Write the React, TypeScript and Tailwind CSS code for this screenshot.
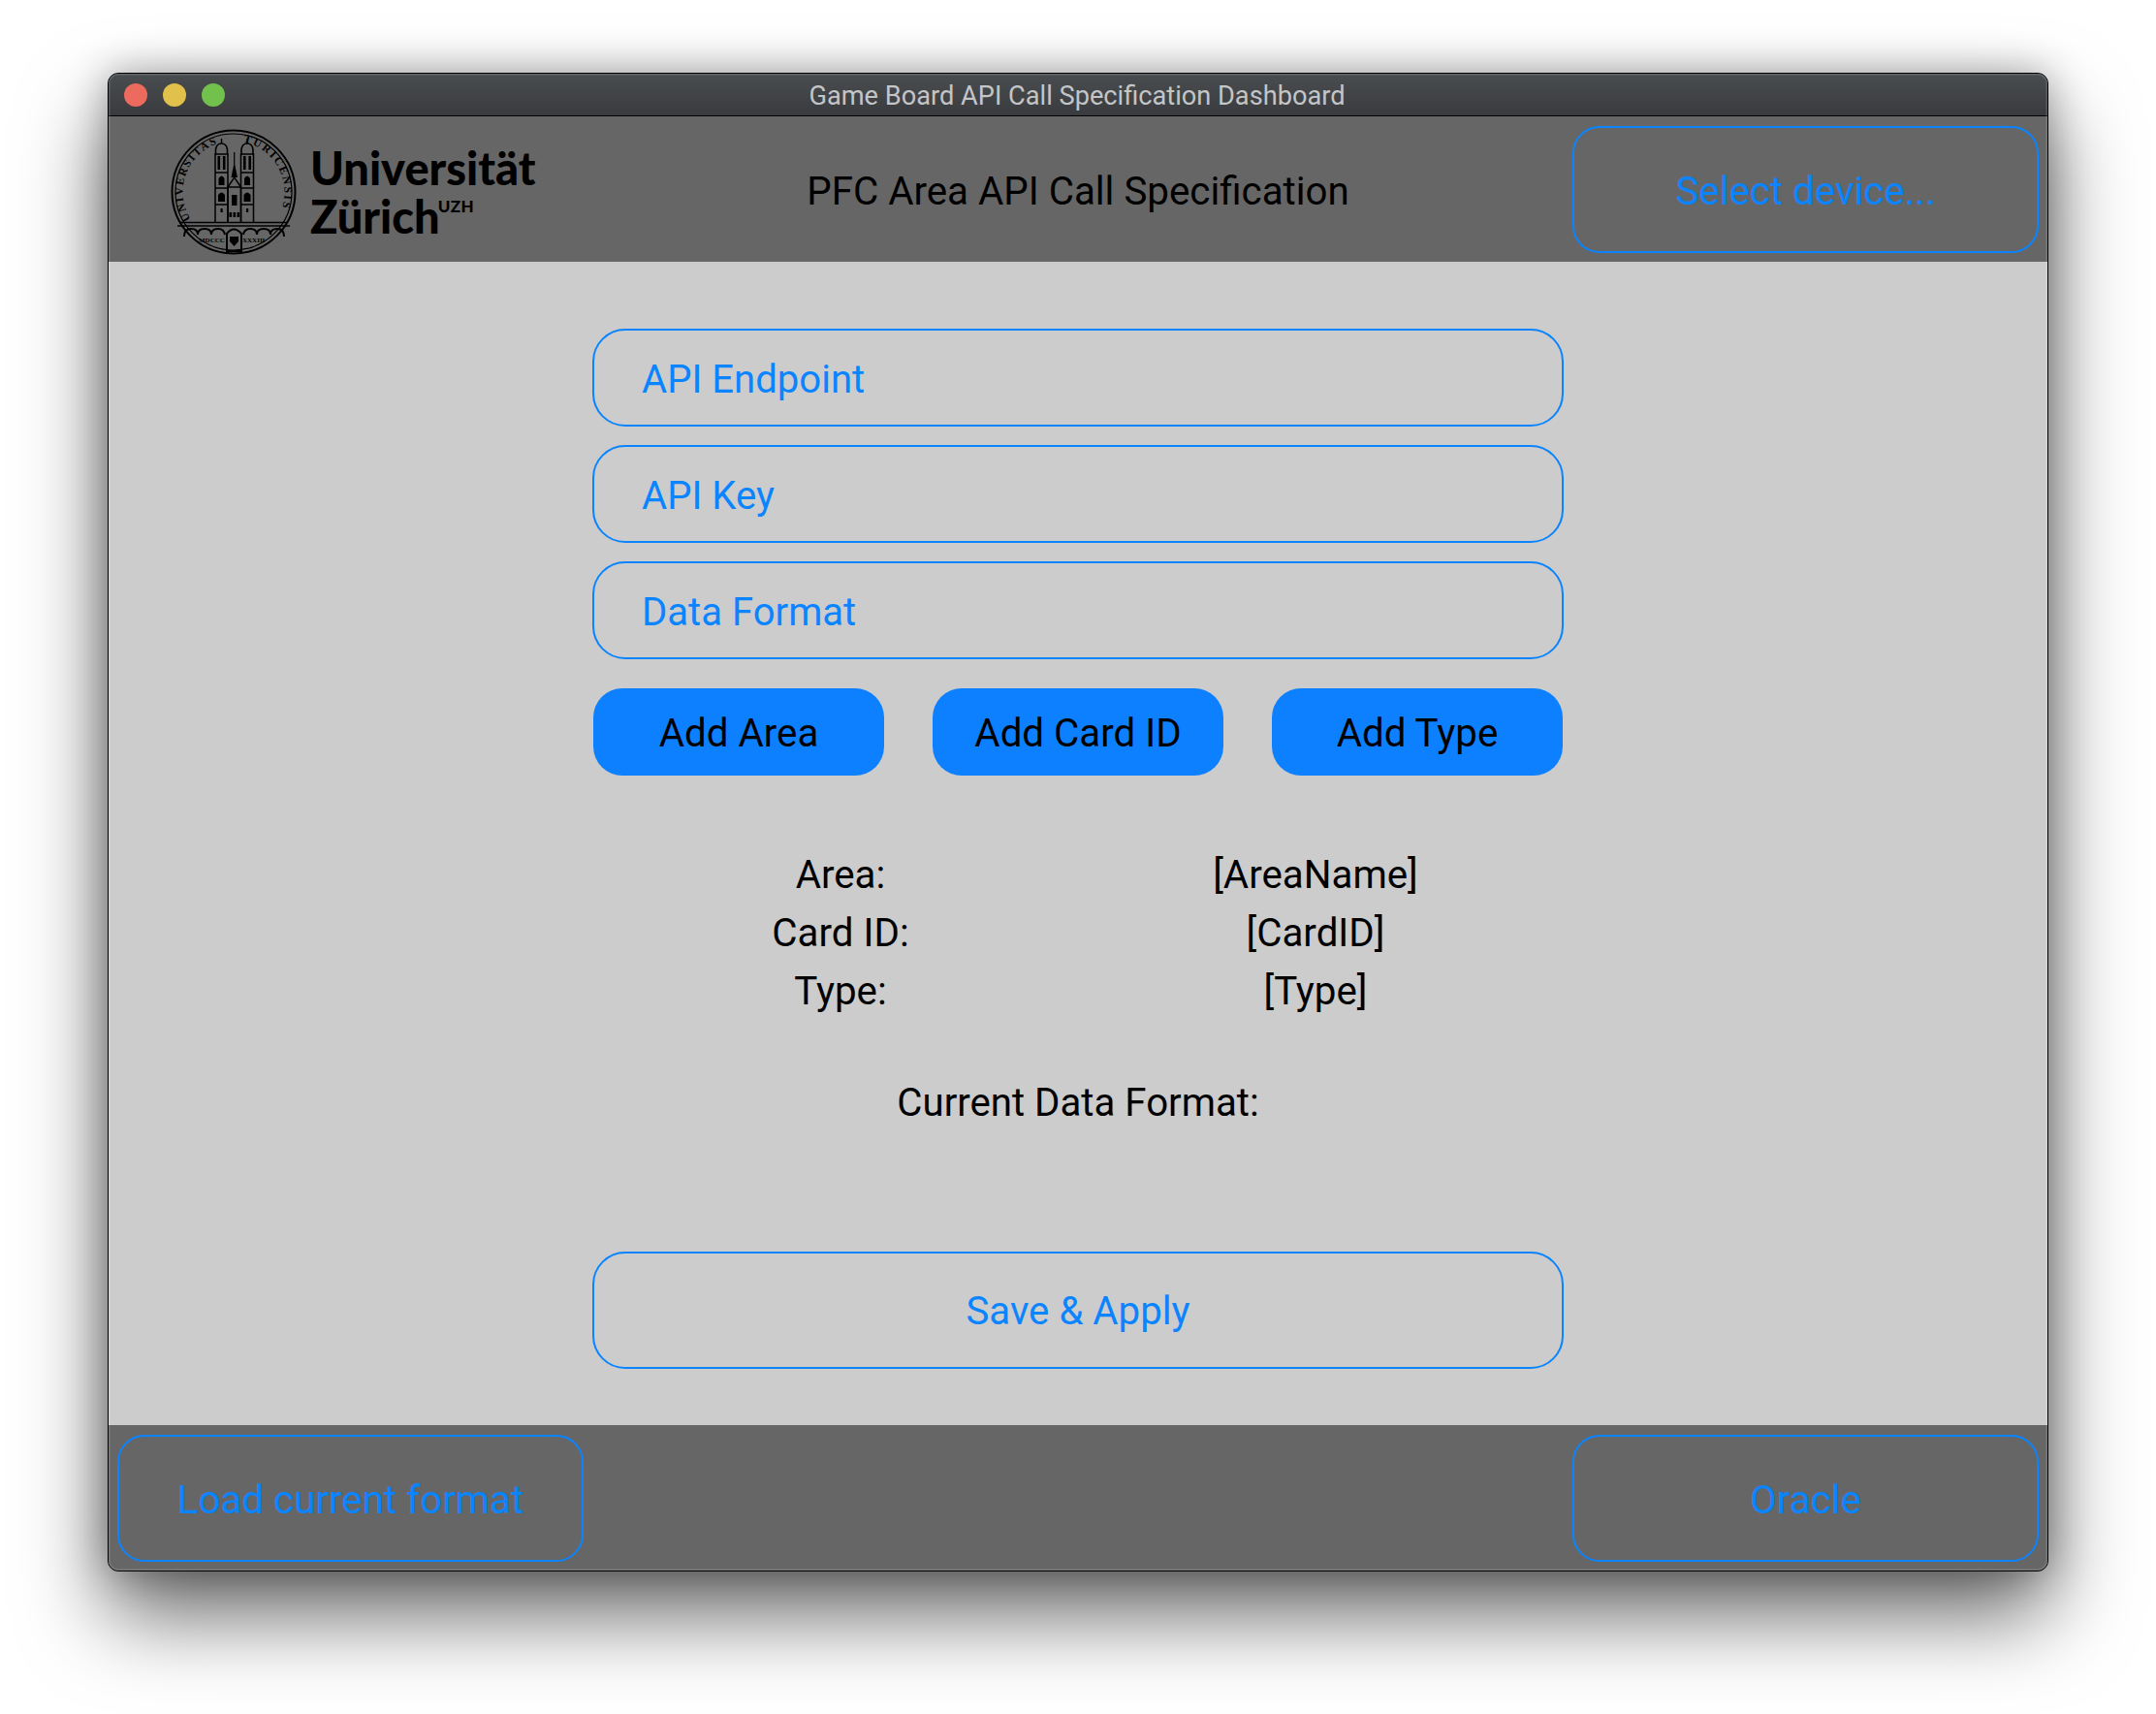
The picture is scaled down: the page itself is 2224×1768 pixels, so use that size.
function Tower({ x }: { x: number }) {
  // x is the tower's centre in the seal's viewBox
  return (
    <g>
      <path
        d={`M${x - 6.5} 96V26H${x + 6.5}V96M${x - 6.5} 45H${x + 6.5}M${x - 6.5} 61H${x + 6.5}M${x - 6.5} 78H${x + 6.5}`}
        stroke="#000"
        strokeWidth="1.5"
      />
      <path
        d={`M${x - 6} 26V21Q${x - 5} 15 ${x} 15Q${x + 5} 15 ${x + 6} 21V26`}
        stroke="#000"
        strokeWidth="1.6"
      />
      <path d={`M${x} 10V15`} stroke="#000" strokeWidth="1.4" />
      <g fill="#000">
        <rect x={x - 4} y="28" width="2.6" height="14" />
        <rect x={x + 1.4} y="28" width="2.6" height="14" />
        <path d={`M${x - 3} 58V51Q${x} 46 ${x + 3} 51V58Z`} />
        <path d={`M${x - 3.5} 75V68Q${x} 63 ${x + 3.5} 68V75Z`} />
        <rect x={x - 1} y="82" width="2.2" height="4" />
      </g>
    </g>
  )
}

function Seal() {
  return (
    <svg width="130" height="130" viewBox="0 0 130 130" fill="none" className="shrink-0">
      <circle cx="65" cy="65" r="63.5" stroke="#000" strokeWidth="2" />
      <circle cx="65" cy="65" r="60" stroke="#000" strokeWidth="1.2" />
      <defs>
        <path id="sealLeft" d="M 20.5 93 A 52.5 52.5 0 0 1 60 12.8" />
        <path id="sealRight" d="M 75 13.5 A 52.5 52.5 0 0 1 110 92" />
      </defs>
      <text fill="#000" fontSize="11.5" fontWeight="700" fontFamily="Liberation Serif, serif">
        <textPath href="#sealLeft" textLength="94">UNIVERSITAS</textPath>
      </text>
      <text fill="#000" fontSize="11.5" fontWeight="700" fontFamily="Liberation Serif, serif">
        <textPath href="#sealRight" textLength="88">TURICENSIS</textPath>
      </text>
      <Tower x={52.5} />
      <Tower x={79} />
      {/* nave and spire */}
      <path d="M59 96V60H72.5V96M59 60L65.7 50L72.5 60" stroke="#000" strokeWidth="1.5" />
      <path d="M62.5 50L65.7 34L69 50Z" fill="#000" />
      <path d="M65.7 24V36" stroke="#000" strokeWidth="1.2" />
      <g fill="#000">
        <rect x="63" y="68" width="5.5" height="11" />
        <rect x="60.5" y="86" width="2.6" height="5" />
        <rect x="64.5" y="86" width="2.6" height="5" />
        <rect x="68.5" y="86" width="2.6" height="5" />
      </g>
      {/* bridge */}
      <path d="M9 96.5H121M7 100H123" stroke="#000" strokeWidth="1.6" />
      <path
        d="M14 111Q14 103 21 103Q28 103 28 109Q28 103 35 103Q42 103 42 109Q42 103 49 103Q55 103 56 109M75 109Q76 103 82 103Q89 103 89 109Q89 103 96 103Q103 103 103 109Q103 103 110 103Q117 103 117 111"
        stroke="#000"
        strokeWidth="2"
      />
      <text x="29" y="117" fill="#000" fontSize="7" fontWeight="700" fontFamily="Liberation Serif, serif">MDCCC</text>
      <text x="74" y="117" fill="#000" fontSize="7" fontWeight="700" fontFamily="Liberation Serif, serif">XXXIII</text>
      <path d="M58 108Q65 99 73 108V126H58Z" stroke="#000" strokeWidth="2" />
      <path d="M61 111H70V116L65.5 121L61 116Z" fill="#000" />
    </svg>
  )
}

function Logo() {
  return (
    <div className="flex items-center gap-[14px] pl-[64px] pt-[5px] w-[650px]">
      <Seal />
      <div className="font-['Lato'] font-black text-black text-[47px] leading-[50px] pt-[1px]">
        <div>Universität</div>
        <div className="flex items-start">
          Zürich
          <span className="text-[17px] leading-[16px] mt-[7px] ml-[-2px] tracking-[0.5px]">UZH</span>
        </div>
      </div>
    </div>
  )
}

function OutlineButton({ label }: { label: string }) {
  return (
    <button className="w-[481px] h-[131px] pt-[6px] rounded-[28px] border-2 border-[#0a84ff] text-[#0a84ff] text-[40.3px]">
      {label}
    </button>
  )
}

function Field({ placeholder }: { placeholder: string }) {
  return (
    <input
      placeholder={placeholder}
      className="w-[1002px] h-[101px] pt-[3px] rounded-[34px] border-2 border-[#0a84ff] bg-transparent pl-[49px] text-[40.1px] placeholder:text-[#0a84ff] outline-none"
    />
  )
}

const rows = [
  ["Area:", "[AreaName]"],
  ["Card ID:", "[CardID]"],
  ["Type:", "[Type]"],
]

export default function App() {
  return (
    <div className="w-[2224px] h-[1768px] bg-white pt-[75px] pl-[111px] font-['Roboto'] overflow-hidden">
      <div className="relative w-[2002px] h-[1546px] flex flex-col rounded-[11px] overflow-hidden bg-[#666] border border-black shadow-[0_44px_88px_rgba(0,0,0,0.6),0_0_40px_rgba(0,0,0,0.3)]">
        {/* title bar */}
        <div className="relative h-[44px] shrink-0 flex items-center justify-center bg-gradient-to-b from-[#4a4d50] to-[#393b3f] border-b border-black">
          <div className="absolute left-[16px] top-[10px] flex gap-[16px]">
            <span className="w-[24px] h-[24px] rounded-full bg-[#ec6a5e]" />
            <span className="w-[24px] h-[24px] rounded-full bg-[#e2c04c]" />
            <span className="w-[24px] h-[24px] rounded-full bg-[#72c14c]" />
          </div>
          <span className="text-[27.2px] text-[#c4c5c7] mt-[4px] ml-[-2px]">Game Board API Call Specification Dashboard</span>
        </div>

        {/* header */}
        <div className="h-[150px] shrink-0 flex items-center justify-between bg-[#666]">
          <Logo />
          <div className="text-[40.3px] text-black pt-[6px]">PFC Area API Call Specification</div>
          <div className="w-[650px] pr-[9px] flex justify-end">
            <OutlineButton label="Select device..." />
          </div>
        </div>

        {/* body */}
        <div className="flex-1 flex flex-col items-center bg-[#ccc] pt-[69px]">
          <div className="flex flex-col gap-[19px]">
            <Field placeholder="API Endpoint" />
            <Field placeholder="API Key" />
            <Field placeholder="Data Format" />
          </div>
          <div className="w-[1000px] flex justify-between mt-[30px]">
            {["Add Area", "Add Card ID", "Add Type"].map((label) => (
              <button key={label} className="w-[300px] h-[90px] pt-[5px] rounded-[30px] bg-[#0d80ff] text-black text-[40.3px]">
                {label}
              </button>
            ))}
          </div>
          <div className="w-[980px] grid grid-cols-2 mt-[73px] text-[40.3px] leading-[60px] text-black text-center">
            {rows.map(([name, value]) => (
              <div key={name} className="contents">
                <div>{name}</div>
                <div>{value}</div>
              </div>
            ))}
          </div>
          <div className="mt-[55px] text-[40.2px] leading-[60px] text-black">Current Data Format:</div>
          <button className="mt-[123px] w-[1002px] h-[121px] pt-[4px] rounded-[34px] border-2 border-[#0a84ff] text-[#0a84ff] text-[40.2px]">
            Save &amp; Apply
          </button>
        </div>

        {/* footer */}
        <div className="h-[150px] shrink-0 flex items-center justify-between bg-[#666] pl-[9px] pr-[9px]">
          <OutlineButton label="Load current format" />
          <OutlineButton label="Oracle" />
        </div>

        {/* thin light edge of the window frame */}
        <div className="absolute inset-0 rounded-[10px] pointer-events-none shadow-[inset_0_0_0_1.5px_rgba(255,255,255,0.14)]" />
      </div>
    </div>
  )
}
